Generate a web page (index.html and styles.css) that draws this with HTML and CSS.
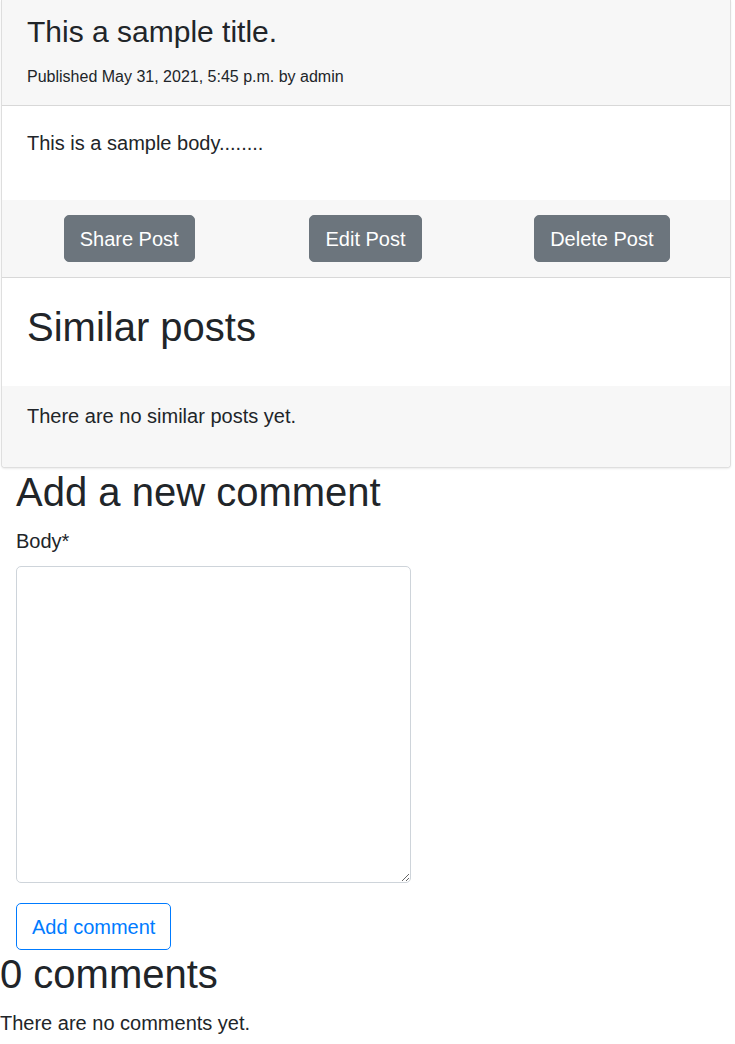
FILE: index.html
```html
<!DOCTYPE html>
<html lang="en">
<head>
<meta charset="utf-8">
<title>This a sample title.</title>
<link rel="stylesheet" href="styles.css">
</head>
<body>
<div class="card">
  <div class="card-header">
    <h4 class="post-title">This a sample title.</h4>
    <p class="post-meta">Published May 31, 2021, 5:45 p.m. by admin</p>
  </div>
  <div class="post-body">
    <p>This is a sample body........</p>
  </div>
  <div class="post-actions">
    <div class="actions-grid">
      <div class="action-cell"><button class="btn btn-secondary" type="button">Share Post</button></div>
      <div class="action-cell"><button class="btn btn-secondary" type="button">Edit Post</button></div>
      <div class="action-cell"><button class="btn btn-secondary" type="button">Delete Post</button></div>
    </div>
  </div>
  <div class="similar-header">
    <h2 class="section-title">Similar posts</h2>
  </div>
  <div class="similar-footer">
    <p>There are no similar posts yet.</p>
  </div>
</div>

<div class="comment-form">
  <h2 class="section-title">Add a new comment</h2>
  <form>
    <label class="form-label" for="id_body">Body*</label>
    <textarea class="form-control" id="id_body" name="body"></textarea>
    <button class="btn btn-outline-primary" type="button">Add comment</button>
  </form>
</div>

<div class="comments">
  <h2 class="section-title">0 comments</h2>
  <p>There are no comments yet.</p>
</div>
</body>
</html>
```

FILE: styles.css
```css
* {
  box-sizing: border-box;
}

body {
  margin: 0;
  font-family: "Liberation Sans", Arial, sans-serif;
  font-size: 20px;
  line-height: 1.5;
  color: #212529;
  background: #fff;
}

p {
  margin: 0 0 20px;
}

.card {
  margin: 0 4px 0 1px;
  border: 1px solid rgba(0, 0, 0, 0.125);
  border-top: 0;
  border-radius: 0 0 4px 4px;
  box-shadow: 0 1px 2px rgba(0, 0, 0, 0.08);
  background: #fff;
}

.card-header {
  background: #f7f7f7;
  padding: 14px 25px 13px;
  border-bottom: 1px solid rgba(0, 0, 0, 0.125);
}

.post-title {
  margin: 0 0 12px;
  font-size: 30px;
  line-height: 1.2;
  font-weight: 400;
}

.post-meta {
  margin: 0;
  font-size: 16px;
  line-height: 30px;
}

.post-body {
  padding: 22px 25px 42px;
}

.post-body p {
  margin: 0;
}

.post-actions {
  background: #f7f7f7;
  padding: 15px 25px;
  border-bottom: 1px solid rgba(0, 0, 0, 0.125);
}

.actions-grid {
  display: grid;
  grid-template-columns: repeat(3, 1fr);
  margin: 0 -15px 0 -16px;
}

.action-cell {
  display: flex;
  justify-content: center;
}

.btn {
  display: inline-block;
  font-family: inherit;
  font-size: 20px;
  line-height: 30px;
  padding: 7.5px 15px;
  border-radius: 5px;
  border: 1px solid transparent;
  cursor: pointer;
}

.btn-secondary {
  background: #6c757d;
  border-color: #6c757d;
  color: #fff;
}

.btn-outline-primary {
  background: #fff;
  border-color: #007bff;
  color: #007bff;
}

.similar-header {
  padding: 25px 25px 25px;
}

.section-title {
  margin: 0 0 10px;
  font-size: 40px;
  line-height: 1.2;
  font-weight: 400;
}

.similar-footer {
  background: #f7f7f7;
  padding: 15px 25px 16px;
  border-radius: 0 0 4px 4px;
}

.comment-form {
  padding: 0 16px;
}

.comment-form form {
  display: flex;
  flex-direction: column;
  align-items: flex-start;
}

.form-label {
  display: block;
  margin-bottom: 10px;
}

.form-control {
  display: block;
  width: 395px;
  height: 317px;
  border: 1px solid #ced4da;
  border-radius: 5px;
  font-family: inherit;
  font-size: 20px;
  margin: 0 0 20px;
  padding: 7px 15px;
  background: #fff;
}

.comments p {
  margin: 0;
}
```
